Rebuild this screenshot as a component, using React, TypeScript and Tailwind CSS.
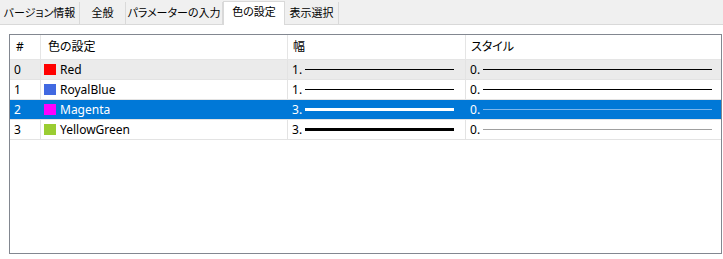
const font = "font-['Noto_Sans','Noto_Sans_CJK_JP',sans-serif] [font-feature-settings:'palt']";

const tabs = [
  { label: 'バージョン情報', w: 'w-[80px]' },
  { label: '全般', w: 'w-[46px]' },
  { label: 'パラメーターの入力', w: 'w-[97px]' },
  { label: '色の設定', w: 'w-[62px]', active: true },
  { label: '表示選択', w: 'w-[54px]' },
];

type Row = {
  id: number;
  name: string;
  swatch: string;
  width: number;
  style: number;
  thick: boolean;
  styleLine: string;
};

const rows: Row[] = [
  { id: 0, name: 'Red', swatch: 'bg-[#ff0000]', width: 1, style: 0, thick: false, styleLine: 'bg-black' },
  { id: 1, name: 'RoyalBlue', swatch: 'bg-[#4169e1]', width: 1, style: 0, thick: false, styleLine: 'bg-black' },
  { id: 2, name: 'Magenta', swatch: 'bg-[#ff00ff]', width: 3, style: 0, thick: true, styleLine: 'bg-[#7fb6ea]' },
  { id: 3, name: 'YellowGreen', swatch: 'bg-[#9acd32]', width: 3, style: 0, thick: true, styleLine: 'bg-[#a0a0a0]' },
];

function TabBar() {
  return (
    <div className="h-[25px] bg-[#f0f0f0] border-b border-[#d9d9d9] flex items-end">
      {tabs.map(t =>
        t.active ? (
          <div
            key={t.label}
            className={`${t.w} h-[24px] -mb-px bg-white border-x border-t border-[#d9d9d9] flex items-center justify-center pb-[2px] text-[11px] whitespace-nowrap text-black`}
          >
            {t.label}
          </div>
        ) : (
          <div
            key={t.label}
            className={`${t.w} h-[22px] border-r border-[#d9d9d9] flex items-center justify-center text-[11px] whitespace-nowrap text-black`}
          >
            {t.label}
          </div>
        )
      )}
    </div>
  );
}

function Table() {
  return (
    <div className="h-[220px] border border-[#828790] bg-white">
      {/* header */}
      <div className="h-[25px] flex border-b border-[#e5e5e5] text-[12px] text-black">
        <div className="w-[31px] border-r border-[#e5e5e5] flex items-center pl-[6px]">#</div>
        <div className="w-[247px] border-r border-[#e5e5e5] flex items-center pl-[7px]">色の設定</div>
        <div className="w-[178px] border-r border-[#e5e5e5] flex items-center pl-[5px]">幅</div>
        <div className="flex-1 flex items-center pl-[5px]">スタイル</div>
      </div>
      {rows.map(r => {
        const sel = r.id === 2;
        const bg = sel ? 'bg-[#0078d7] text-white' : r.id === 0 ? 'bg-[#ebebeb] text-black' : 'bg-white text-black';
        const grid = sel ? 'border-[#0078d7]' : 'border-[#e3e3e3]';
        return (
          <div key={r.id} className={`h-[20px] flex border-b border-[#e3e3e3] text-[12px] ${bg}`}>
            <div className={`w-[31px] border-r ${grid} flex items-center pl-[4px]`}>{r.id}</div>
            <div className={`w-[247px] border-r ${grid} flex items-center pl-[3px] gap-[4px]`}>
              <span className={`w-[12px] h-[11px] ${r.swatch}`} />
              <span>{r.name}</span>
            </div>
            <div className={`w-[178px] border-r ${grid} flex items-center pl-[4px]`}>
              <span className="w-[13px]">{r.width}.</span>
              <span
                className={`w-[149px] ${r.thick ? 'h-[3px]' : 'h-px'} ${sel ? 'bg-white' : 'bg-black'}`}
              />
            </div>
            <div className="flex-1 flex items-center pl-[4px]">
              <span className="w-[13px]">{r.style}.</span>
              <span className={`w-[229px] h-px ${r.styleLine}`} />
            </div>
          </div>
        );
      })}
    </div>
  );
}

export default function App() {
  return (
    <div className={`w-[723px] h-[259px] bg-white overflow-hidden ${font}`}>
      <TabBar />
      <div className="pl-[9px] pr-[1px] pt-[9px]">
        <Table />
      </div>
    </div>
  );
}
